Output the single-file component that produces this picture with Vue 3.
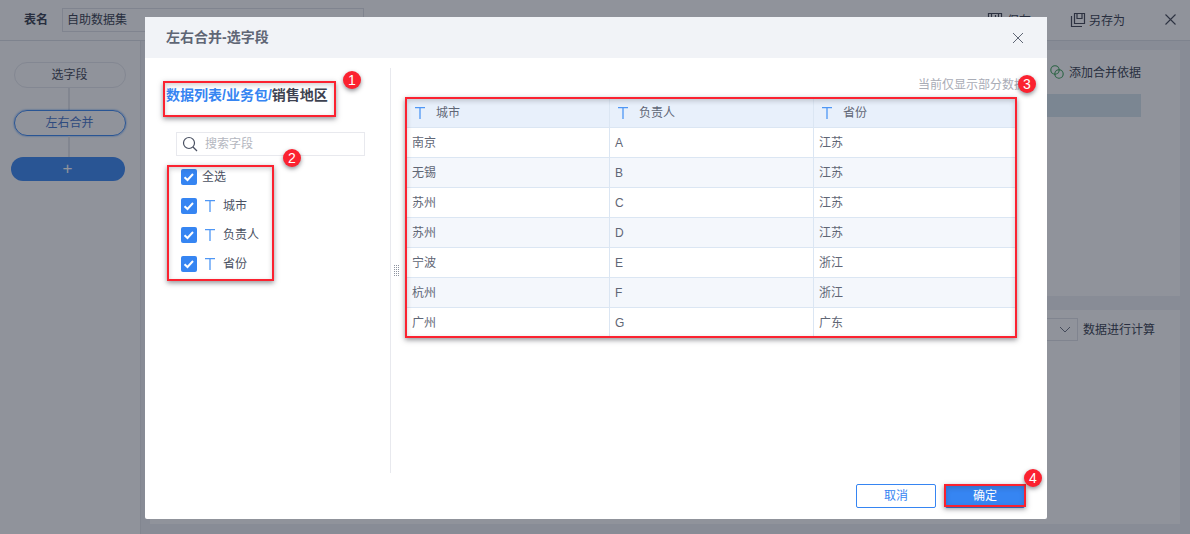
<script setup>
const fields = ['城市', '负责人', '省份']
const rows = [
  ['南京', 'A', '江苏'],
  ['无锡', 'B', '江苏'],
  ['苏州', 'C', '江苏'],
  ['苏州', 'D', '江苏'],
  ['宁波', 'E', '浙江'],
  ['杭州', 'F', '浙江'],
  ['广州', 'G', '广东'],
]
</script>

<template>
  <div class="page">
    <header class="topbar">
      <b class="name-label">表名</b>
      <div class="name-input">自助数据集</div>
      <div class="top-actions">
        <span class="top-act save">
          <svg width="16" height="16" viewBox="0 0 16 16" fill="none" stroke="#3d4250" stroke-width="1.2"><path d="M1.500 1.500h13v13h-13zM4.500 1.500v5h7v-5M8.500 3v2"/></svg>
          <span class="nudge">保存</span>
        </span>
        <span class="top-act saveas">
          <svg width="16" height="16" viewBox="0 0 16 16" fill="none" stroke="#3d4250" stroke-width="1.2"><path d="M4.500 1.500h10v10h-10zM7 1.500v5h5v-5M1.500 4v10.500h10.500"/></svg>
          <span class="nudge">另存为</span>
        </span>
        <svg class="top-close" width="11" height="11" viewBox="0 0 11 11" stroke="#3d4250" stroke-width="1.100"><path d="M.5.5l10 10M10.500.5l-10 10"/></svg>
      </div>
    </header>
    <div class="workspace">
      <aside class="steps">
        <div class="pill">选字段</div>
        <div class="link"></div>
        <div class="pill active">左右合并</div>
        <div class="link short"></div>
        <div class="add">+</div>
      </aside>
      <main class="config">
        <section class="panel first">
          <div class="merge-row">
            <svg width="14" height="14" viewBox="0 0 14 14" fill="none" stroke="#36a052" stroke-width="1.100"><circle cx="5" cy="5" r="4.200"/><circle cx="9" cy="9" r="4.200"/></svg>
            <span class="nudge">添加合并依据</span>
          </div>
          <div class="strip"></div>
        </section>
        <section class="panel second">
          <div class="select">
            <svg width="12" height="7" viewBox="0 0 12 7" fill="none" stroke="#6b7180" stroke-width="1"><path d="M1 1l5 5 5-5"/></svg>
          </div>
          <span class="calc">数据进行计算</span>
        </section>
      </main>
    </div>

    <div class="mask"></div>

    <div class="modal">
      <div class="modal-head">
        <span>左右合并-选字段</span>
        <svg width="12" height="12" viewBox="0 0 12 12" stroke="#5f6675" stroke-width="1"><path d="M1 1l10 10M11 1L1 11"/></svg>
      </div>
      <div class="modal-body">
        <div class="left">
          <div class="crumb"><span class="blue">数据列表/业务包/</span>销售地区</div>
          <div class="search">
            <svg width="16" height="16" viewBox="0 0 16 16" fill="none" stroke="#4a5162" stroke-width="1.200"><circle cx="7" cy="7" r="5.500"/><path d="M11 11l4 4"/></svg>
            <span>搜索字段</span>
          </div>
          <div class="check-row">
            <span class="check"><svg width="16" height="16" viewBox="0 0 16 16" fill="none" stroke="#fff" stroke-width="2"><path d="M3.500 8.200l3 2.800 5.500-6"/></svg></span>
            <span class="nudge">全选</span>
          </div>
          <div v-for="f in fields" :key="f" class="check-row">
            <span class="check"><svg width="16" height="16" viewBox="0 0 16 16" fill="none" stroke="#fff" stroke-width="2"><path d="M3.500 8.200l3 2.800 5.500-6"/></svg></span>
            <svg class="t" width="10" height="12" viewBox="0 0 10 12" fill="none" stroke="#4f97f5" stroke-width="1.300"><path d="M0 .7h10M5 .7V12"/></svg>
            <span class="nudge">{{ f }}</span>
          </div>
        </div>
        <div class="divider">
          <span class="grip"></span>
        </div>
        <div class="right">
          <div class="note">当前仅显示部分数据</div>
          <div class="table">
            <div class="tr th">
              <div v-for="f in fields" :key="f" class="cell">
                <svg class="t" width="10" height="12" viewBox="0 0 10 12" fill="none" stroke="#4f97f5" stroke-width="1.300"><path d="M0 .7h10M5 .7V12"/></svg>
                <span class="nudge">{{ f }}</span>
              </div>
            </div>
            <div v-for="(r, i) in rows" :key="i" class="tr" :class="{ odd: i % 2 === 1 }">
              <div v-for="(c, j) in r" :key="j" class="cell"><span class="nudge">{{ c }}</span></div>
            </div>
          </div>
        </div>
      </div>
      <div class="modal-foot">
        <button class="btn ghost">取消</button>
        <button class="btn primary">确定</button>
      </div>
    </div>

    <div class="mark m1"></div>
    <div class="mark m2"></div>
    <div class="mark m3"></div>
    <div class="mark m4"></div>
    <div class="dot d1">1</div>
    <div class="dot d2">2</div>
    <div class="dot d3">3</div>
    <div class="dot d4">4</div>
  </div>
</template>

<style scoped>
.page {
  position: relative;
  width: 1190px;
  height: 534px;
  overflow: hidden;
  background: #f0f1f5;
  color: #333a4a;
  font: 12px/1.4 "Liberation Sans", "Noto Sans CJK SC", sans-serif;
}
.nudge { padding-top: 2px; }
.topbar {
  height: 41px;
  box-sizing: border-box;
  border-bottom: 1px solid #dcdfe6;
  background: #fff;
  display: flex;
  align-items: center;
  padding: 0 14px 0 24px;
}
.name-label { width: 38px; font-weight: 700; }
.name-input {
  width: 302px;
  height: 24px;
  box-sizing: border-box;
  border: 1px solid #dfe2e8;
  padding-left: 4px;
  line-height: 22px;
}
.top-actions { margin-left: auto; display: flex; align-items: center; }
.top-act { display: flex; align-items: center; gap: 4px; }
.saveas { gap: 3px; }
.save { margin-right: 39px; }
.top-close { margin-left: 40px; }
.workspace { display: flex; height: 493px; }
.steps {
  width: 141px;
  box-sizing: border-box;
  border-right: 1px solid #e3e5ea;
  background: #fff;
  padding: 21px 14px 0 11px;
  display: flex;
  flex-direction: column;
  align-items: center;
}
.pill {
  width: 112px;
  height: 26px;
  margin-left: 2px;
  box-sizing: border-box;
  border: 1px solid #e6e8ed;
  border-radius: 13px;
  text-align: center;
  line-height: 24px;
  flex: none;
  color: #3d4250;
}
.pill.active { border-color: #3685f2; color: #3f72c8; box-shadow: 0 0 2px #3685f2; }
.link { width: 2px; height: 22px; background: #e3e5ea; flex: none; }
.link.short { height: 21px; }
.add {
  width: 114px;
  height: 24px;
  margin-right: 2px;
  border-radius: 12px;
  background: #3685f2;
  color: #fff;
  text-align: center;
  font-size: 17px;
  line-height: 23px;
  flex: none;
}
.config {
  flex: 1;
  padding: 9px 10px 10px 9px;
  display: flex;
  flex-direction: column;
  gap: 14px;
  min-width: 0;
}
.panel { background: #fff; padding-left: 896px; }
.first { height: 246px; padding-top: 13px; box-sizing: border-box; }
.merge-row { display: flex; align-items: center; gap: 5px; height: 18px; margin-left: 4px; white-space: nowrap; }
.strip { height: 23px; width: 95px; margin: 13px 0 0 0; background: #d6e6ee; }
.second {
  flex: 1;
  display: flex;
  align-items: flex-start;
  gap: 5px;
  padding-top: 8px;
  white-space: nowrap;
}
.calc { line-height: 25px; }
.select {
  width: 32px;
  height: 23px;
  flex: none;
  box-sizing: border-box;
  border: 1px solid #dfe2e8;
  display: flex;
  align-items: center;
  justify-content: flex-end;
  padding-right: 6px;
}
.mask {
  position: absolute;
  inset: 0;
  background: rgba(28, 34, 52, 0.49);
}
.modal {
  position: absolute;
  left: 145px;
  top: 17px;
  width: 902px;
  height: 502px;
  background: #fff;
  border-radius: 2px;
  display: flex;
  flex-direction: column;
}
.modal-head {
  height: 41px;
  flex: none;
  background: #f1f3f7;
  display: flex;
  align-items: center;
  justify-content: space-between;
  padding: 0 23px 0 21px;
  font-size: 14px;
  font-weight: 700;
  color: #5f6675;
}
.modal-body { flex: 1; display: flex; min-height: 0; padding-top: 10px; }
.left { width: 245px; flex: none; box-sizing: border-box; padding: 0 0 0 21px; }
.crumb {
  margin-top: 17px;
  height: 20px;
  line-height: 20px;
  font-size: 14px;
  font-weight: 700;
  color: #3d4250;
  white-space: nowrap;
}
.blue { color: #3685f2; }
.search {
  width: 189px;
  height: 24px;
  box-sizing: border-box;
  margin: 27px 0 6px 10px;
  border: 1px solid #e8e9ee;
  display: flex;
  align-items: center;
  gap: 7px;
  padding-left: 5px;
  color: #b4b7c0;
}
.check-row {
  height: 29px;
  display: flex;
  align-items: center;
  margin-left: 15px;
  color: #4a5162;
}
.check {
  width: 16px;
  height: 16px;
  flex: none;
  background: #3685f2;
  border-radius: 2px;
  margin-right: 5px;
  display: block;
}
.check svg { display: block; }
.check-row .t { margin: 0 8px 0 3px; }
.divider {
  width: 1px;
  height: 405px;
  background: #e8e9ee;
  flex: none;
  position: relative;
}
.grip {
  position: absolute;
  left: 3px;
  top: 197px;
  width: 6px;
  height: 12px;
  background-image: conic-gradient(#8d93a0 25%, transparent 0);
  background-size: 2px 2px;
}
.right { flex: 1; min-width: 0; position: relative; padding: 0 0 0 16px; }
.note {
  height: 30px;
  width: 619px;
  text-align: right;
  color: #a9acb6;
  line-height: 34px;
  white-space: nowrap;
  overflow: hidden;
}
.table { width: 608px; }
.tr {
  display: grid;
  grid-template-columns: 203px 204px 201px;
  height: 30px;
  box-sizing: border-box;
  border-bottom: 1px solid #dbe6f3;
}
.tr.th { background: #e8f0fb; color: #5f6675; }
.tr.odd { background: #f4f7fc; }
.cell {
  display: flex;
  align-items: center;
  padding-left: 5px;
  box-sizing: border-box;
  border-right: 1px solid #dbe6f3;
  color: #5f6675;
}
.cell:last-child { border-right: 0; }
.th .cell { padding-left: 8px; gap: 11px; }
.modal-foot {
  height: 46px;
  flex: none;
  display: flex;
  justify-content: flex-end;
  gap: 9px;
  padding: 11px 22px 0 0;
  box-sizing: border-box;
}
.btn {
  width: 80px;
  height: 24px;
  font: inherit;
  border-radius: 2px;
  padding: 0;
  border: 1px solid #3685f2;
}
.ghost { background: #fff; color: #3685f2; }
.primary { background: #3685f2; color: #fff; }
.mark {
  position: absolute;
  box-sizing: border-box;
  border: 2px solid #fb2230;
  box-shadow: 0 2px 5px rgba(40, 40, 50, 0.5), inset 0 2px 5px rgba(40, 40, 50, 0.22);
}
.m1 { left: 163px; top: 81px; width: 173px; height: 36px; }
.m2 { left: 167px; top: 165px; width: 107px; height: 116px; }
.m3 { left: 405px; top: 97px; width: 612px; height: 241px; }
.m4 { left: 944px; top: 484px; width: 82px; height: 23px; }
.dot {
  position: absolute;
  width: 18px;
  height: 18px;
  border-radius: 50%;
  background: #fb2230;
  color: #fff;
  font: 14px/18px "Liberation Sans", sans-serif;
  text-align: center;
  box-shadow: 0 2px 4px rgba(40, 40, 50, 0.5);
}
.d1 { left: 343px; top: 71px; }
.d2 { left: 283px; top: 149px; }
.d3 { left: 1018px; top: 75px; }
.d4 { left: 1024px; top: 469px; }
</style>
